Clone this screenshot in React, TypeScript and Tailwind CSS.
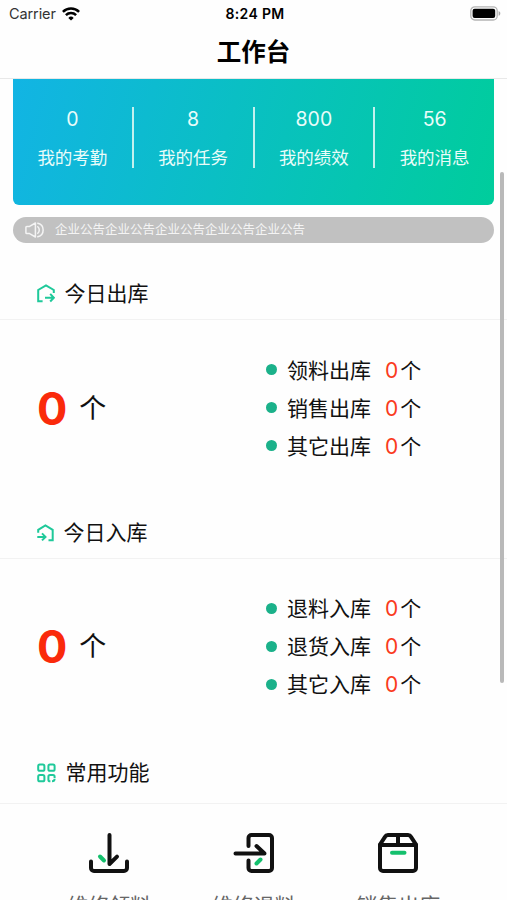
import React, { memo } from 'react';

interface Stat {
  label: string;
  value: number;
}

interface StockRow {
  label: string;
  count: number;
}

const stats: Stat[] = [
  { label: '我的考勤', value: 0 },
  { label: '我的任务', value: 8 },
  { label: '我的绩效', value: 800 },
  { label: '我的消息', value: 56 },
];

const outRows: StockRow[] = [
  { label: '领料出库', count: 0 },
  { label: '销售出库', count: 0 },
  { label: '其它出库', count: 0 },
];

const inRows: StockRow[] = [
  { label: '退料入库', count: 0 },
  { label: '退货入库', count: 0 },
  { label: '其它入库', count: 0 },
];

// --- Icons ---

const WifiIcon = () => (
  <svg width="18" height="14" viewBox="0 0 18 14" fill="none" stroke="#000" strokeWidth="2.5">
    <path d="M0.9 4.9a11.5 11.5 0 0 1 16.2 0" />
    <path d="M3.9 8.2a7.2 7.2 0 0 1 10.2 0" />
    <path d="M9 13.6 6.3 10.9a3.8 3.8 0 0 1 5.4 0Z" fill="#000" stroke="none" />
  </svg>
);

const BatteryIcon = () => (
  <svg width="31" height="15" viewBox="0 0 31 15" fill="none" className="-mt-px">
    <rect x="0.8" y="0.8" width="26.4" height="13.2" rx="4" stroke="#b4b4b4" strokeWidth="1.3" />
    <rect x="2.6" y="2.7" width="22.6" height="9.4" rx="2" fill="#000" />
    <path d="M28.6 5v4.8c1-.4 1.7-1.3 1.7-2.4S29.6 5.4 28.6 5Z" fill="#a8a8a8" />
  </svg>
);

const SpeakerIcon = () => (
  <svg width="19" height="16" viewBox="0 0 19 16" fill="none" stroke="#f4f4f4" strokeWidth="1.5" strokeLinejoin="round" strokeLinecap="round">
    <path d="M1.8 4.4H4.6L10.4 1V15L4.6 11.6H1.8A.9.9 0 0 1 .9 10.7V5.3A.9.9 0 0 1 1.8 4.4Z" />
    <path d="M12.8 4.8a4.2 4.2 0 0 1 0 6.4" />
    <path d="M12.8 1.2a7 7 0 0 1 0 13.6" />
  </svg>
);

const OutIcon = () => (
  <svg width="18" height="19" viewBox="0 0 18 19" fill="none" stroke="#1fc99a" strokeWidth="2" className="-mt-px">
    <path d="M5.6 17.2H1.2V6L9 1.4 16.8 6V9" />
    <path d="M8 13.7h8.8M13.2 9.9l3.6 3.8-3.6 3.8" />
  </svg>
);

const InIcon = () => (
  <svg width="17" height="18" viewBox="0 0 17 18" fill="none" stroke="#1fc99a" strokeWidth="2">
    <path d="M1.2 8.8V5.8L8.4 1.4 15.7 5.8V16.3H11.5" />
    <path d="M.3 12.9H8.3M5 9.4l3.5 3.5-3.5 3.5" />
  </svg>
);

const GridIcon = () => (
  <svg width="19" height="20" viewBox="0 0 19 20" fill="none" stroke="#1fc99a" strokeWidth="2">
    <rect x="1.2" y="1.6" width="6.2" height="6.2" rx="1.6" />
    <rect x="11.4" y="1.6" width="6.2" height="6.2" rx="1.6" />
    <rect x="1.2" y="12.1" width="6.2" height="6.2" rx="1.6" />
    <path d="M17.600 14.900V13.700a1.600 1.600 0 0 0-1.600-1.600H13a1.600 1.600 0 0 0-1.600 1.600V16.700a1.600 1.600 0 0 0 1.600 1.600H13.400" />
    <path d="M15 18.300c1.500 0 2.600-1 2.600-2.600" />
  </svg>
);

const ReceiveIcon = () => (
  <svg width="42" height="42" viewBox="0 0 42 42" fill="none" stroke="#111" strokeWidth="4" strokeLinecap="round" strokeLinejoin="round">
    <path d="M3 29.5V36a3 3 0 0 0 3 3H36a3 3 0 0 0 3-3V29.5" />
    <path d="M21.5 3V32L29 24.6" />
    <path d="M12 24.5l4 4" stroke="#14c06d" />
  </svg>
);

const ReturnIcon = () => (
  <svg width="42" height="42" viewBox="0 0 42 42" fill="none" stroke="#111" strokeWidth="4" strokeLinecap="round" strokeLinejoin="round">
    <path d="M15.5 14V6a3 3 0 0 1 3-3H36A3 3 0 0 1 39 6V36a3 3 0 0 1-3 3H18.5a3 3 0 0 1-3-3V28.5" />
    <path d="M2.5 21.5H31.5L23.5 14" />
    <path d="M27.5 27.5l-4 4" stroke="#14c06d" />
  </svg>
);

const BoxIcon = () => (
  <svg width="42" height="42" viewBox="0 0 42 42" fill="none" stroke="#111" strokeWidth="4" strokeLinecap="round" strokeLinejoin="round">
    <path d="M3 13H39V36a3 3 0 0 1-3 3H6a3 3 0 0 1-3-3Z" />
    <path d="M3 12.5 8 4.8A3.5 3.5 0 0 1 11 3H31a3.5 3.5 0 0 1 3 1.8L39 12.5M21 3.5V12" />
    <path d="M15 20.7H27.5" stroke="#14c06d" />
  </svg>
);

const shortcuts = [
  { label: '维修领料', icon: <ReceiveIcon /> },
  { label: '维修退料', icon: <ReturnIcon /> },
  { label: '销售出库', icon: <BoxIcon /> },
];

// --- Page ---

const App: React.FC = () => {
  return (
    <div className="relative flex h-[900px] w-[507px] flex-col overflow-hidden bg-[#fefefe] font-['Inter','Noto_Sans_CJK_SC',sans-serif] text-[#111]">
      <header className="h-[79px] shrink-0 border-b border-[#e8e8e8]">
        <div className="grid h-7 grid-cols-3 items-center pr-[6px] pl-[9px] text-sm">
          <div className="flex items-center gap-[6px] text-[#333]">
            <span className="text-[14.5px] tracking-[-0.1px]">Carrier</span>
            <WifiIcon />
          </div>
          <span className="text-center text-[14px] font-semibold tracking-[0.35px] text-black">8:24 PM</span>
          <div className="flex justify-end">
            <BatteryIcon />
          </div>
        </div>
        <h1 className="text-center text-[24.5px] leading-[48px] font-bold text-black">工作台</h1>
      </header>

      <div className="mx-[13px] flex h-[126px] shrink-0 rounded-b-md bg-linear-[105deg,#12b4e4,#00cd9c] pt-[28px] text-[#e9fcf9]">
        {stats.map((stat, i) => (
          <div
            key={stat.label}
            className={`flex h-[61px] flex-1 flex-col items-center justify-between ${i < stats.length - 1 ? 'border-r-2 border-[#c4f1ee]' : ''}`}
          >
            <span className="text-[19.5px] leading-6">{stat.value}</span>
            <span className="text-[17.5px] leading-[21px]">{stat.label}</span>
          </div>
        ))}
      </div>

      <div className="mx-[13px] mt-3 flex h-[26px] shrink-0 items-center gap-[11px] rounded-full bg-[#c1c1c1] pl-3 text-[12.5px] text-[#f4f4f4]">
        <SpeakerIcon />
        <span className="pt-px">企业公告企业公告企业公告企业公告企业公告</span>
      </div>

      <div className="mt-[25px] shrink-0">
        <SectionTitle title="今日出库" icon={<OutIcon />} />
        <StockSummary total={0} rows={outRows} />
      </div>

      <div className="shrink-0">
        <SectionTitle title="今日入库" icon={<InIcon />} />
        <StockSummary total={0} rows={inRows} />
      </div>

      <div className="shrink-0">
        <SectionTitle title="常用功能" icon={<GridIcon />} tall />
        <div className="flex pt-[28px] pl-[37px]">
          {shortcuts.map((item) => (
            <div key={item.label} className="flex w-[144.5px] flex-col items-center">
              {item.icon}
              <span className="mt-[17px] text-[21px] leading-[30px] text-[#666]">{item.label}</span>
            </div>
          ))}
        </div>
      </div>

      {/* Scroll indicator */}
      <div className="absolute top-[172px] right-[3px] h-[511px] w-[4px] rounded-full bg-[#b9b9b9]" />
    </div>
  );
};

// --- Section pieces ---

interface SectionTitleProps {
  title: string;
  icon: React.ReactNode;
  tall?: boolean;
}

const SectionTitle = memo<SectionTitleProps>(({ title, icon, tall }) => (
  <div className={`flex items-start border-b border-[#f2f2f2] pl-[37px] ${tall ? 'h-[59px] pt-[13px]' : 'h-[52px] pt-[11px]'}`}>
    <div className="flex h-[30px] items-center gap-[9.5px]">
      {icon}
      <h2 className="text-[21px] leading-[30px]">{title}</h2>
    </div>
  </div>
));

interface StockSummaryProps {
  total: number;
  rows: StockRow[];
}

const StockSummary = memo<StockSummaryProps>(({ total, rows }) => (
  <div className="flex h-[186.5px] pt-[31.5px] pl-[37px]">
    <div className="flex h-[114px] w-[229px] items-center gap-3">
      <span className="text-[45px] font-bold text-[#fa2a0b]">{total}</span>
      <span className="pt-px text-[27px]">个</span>
    </div>
    <ul>
      {rows.map((row) => (
        <li key={row.label} className="flex h-[38px] items-center text-[21px]">
          <span className="mr-[10px] mb-[2px] size-[11px] rounded-full bg-[#1bb18a]" />
          <span>{row.label}</span>
          <span className="ml-[14px] text-[#fa3a1c]">{row.count}</span>
          <span className="ml-[2px]">个</span>
        </li>
      ))}
    </ul>
  </div>
));

export default App;
